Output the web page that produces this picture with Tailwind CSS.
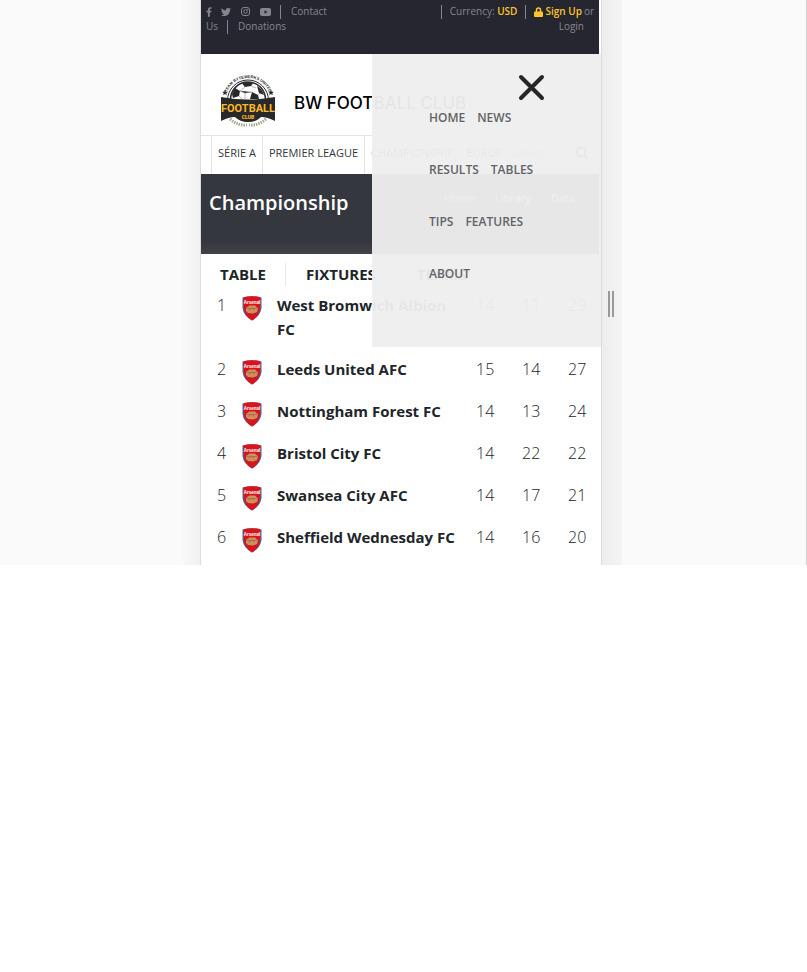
<!DOCTYPE html>
<html lang="en">
<head>
<meta charset="utf-8">
<meta name="viewport" content="width=device-width, initial-scale=1">
<title>BW Football Club</title>
<script src="https://cdn.jsdelivr.net/npm/@tailwindcss/browser@4"></script>
</head>
<body class="bg-white font-['Open_Sans','Noto_Sans',sans-serif] text-[#212529]">
<svg class="hidden" aria-hidden="true">
  <symbol id="crest" viewBox="0 0 20 25">
    <path d="M.5 1.500Q10-1 19.500 1.500V12Q18.500 20 10 24.500Q1.500 20 .5 12Z" fill="#5a5a8c"/>
    <path d="M1.800 1.300Q10-.8 18.200 1.300V10Q17.500 20 10 24.500Q2.500 20 1.800 10Z" fill="#d9141b"/>
    <text x="10" y="7.500" text-anchor="middle" font-family="Liberation Sans" font-size="4.500" font-weight="700" fill="#fff">Arsenal</text>
    <path d="M4 12L7.500 9.500L13 9.500L16 12.500L15 16L11 17.500L6 17L4 15Z" fill="#c9935f"/>
    <path d="M7 14.500a2.500 2 0 0 1 5 0M4.500 12.500H15" fill="none" stroke="#b4604a" stroke-width=".8"/>
  </symbol>
</svg>
<div class="flex justify-center border-r border-[#d4d4d4] bg-[#fafafa] pr-1">
  <div class="flex flex-1 justify-end"><span class="w-5 bg-linear-to-r from-[#fafafa] to-[#f1f1f1]"></span></div>
  <main class="relative w-full max-w-[402px] shrink-0 border-x border-[#dcdcdc] bg-white pb-[5px]">
    <header class="mr-[2px] flex h-[54px] justify-between bg-[#25262f] px-[5px] pt-1 text-[10px] leading-[15px] text-[#85868c]">
      <div>
        <div class="flex items-center">
          <a href="#" aria-label="Facebook"><svg class="h-[10px] w-[6px]" viewBox="0 0 320 512" fill="currentColor"><path d="M279 288l14-93h-89v-60c0-25 12-50 52-50h41V7S260 0 225 0C152 0 104 44 104 125v70H23v93h81v224h100V288z"/></svg></a>
          <a href="#" aria-label="Twitter" class="ml-[9px]"><svg class="h-[10px] w-[10px]" viewBox="0 0 512 512" fill="currentColor"><path d="M459 152c1 4 1 9 1 13 0 139-106 299-299 299-59 0-115-17-161-47 8 1 16 1 25 1 49 0 94-17 130-45-46-1-85-31-98-73 7 1 13 2 20 2 9 0 19-1 28-4-48-10-84-52-84-103v-1c14 8 30 13 47 13-28-19-47-51-47-87 0-19 5-37 14-53 52 64 129 105 216 110-2-8-3-16-3-24 0-58 47-105 105-105 30 0 58 13 77 33 24-5 46-13 67-25-8 24-25 45-46 58 21-2 42-8 60-16-14 21-32 39-52 54z"/></svg></a>
          <a href="#" aria-label="Instagram" class="ml-[10px]"><svg class="h-[9px] w-[9px]" viewBox="0 0 18 18" fill="none" stroke="currentColor" stroke-width="2"><rect x="1" y="1" width="16" height="16" rx="5"/><circle cx="9" cy="9" r="3.700"/><circle cx="13.600" cy="4.400" r=".6"/></svg></a>
          <a href="#" aria-label="YouTube" class="ml-[10px]"><svg class="h-[8px] w-[11px]" viewBox="0 0 22 16"><rect width="22" height="16" rx="4" fill="currentColor"/><path d="M9 4.500v7l6-3.500z" fill="#25262f"/></svg></a>
          <span class="ml-[9px] h-[14px] w-px bg-current"></span>
          <a href="#" class="ml-[10px]">Contact</a>
        </div>
        <div class="flex items-center">
          <a href="#">Us</a>
          <span class="ml-[9px] h-[14px] w-px bg-current"></span>
          <a href="#" class="ml-[10px]">Donations</a>
        </div>
      </div>
      <div>
        <div class="flex items-center">
          <span class="h-[14px] w-px bg-current"></span>
          <span class="ml-[8px]">Currency: <a href="#" class="font-semibold text-[#fdc52d]">USD</a></span>
          <span class="ml-[8px] h-[14px] w-px bg-current"></span>
          <svg class="ml-[8px] h-[10px] w-[9px] text-[#fdc52d]" viewBox="0 0 18 20" aria-hidden="true"><path d="M5 10V6a4 4 0 0 1 8 0v4" fill="none" stroke="currentColor" stroke-width="3"/><rect y="9" width="18" height="11" rx="2" fill="currentColor"/></svg>
          <a href="#" class="ml-[2px] font-semibold text-[#fdc52d]">Sign Up</a><span class="ml-[2px]">or</span>
        </div>
        <div class="pr-[10px] text-right"><a href="#">Login</a></div>
      </div>
    </header>

    <div class="flex h-[81px] items-center pl-[19px] pt-3">
      <svg class="h-[52px] w-[56px] overflow-visible" viewBox="0 0 56 52" role="img" aria-label="Team Bytewerks United Football Club">
        <defs><path id="arc" d="M5 26A23 23 0 0 1 51 26"/></defs>
        <text font-family="Liberation Sans" font-size="4" font-weight="700" fill="#292929" text-anchor="middle"><textPath href="#arc" startOffset="50%">TEAM BYTEWERKS UNITED</textPath></text>
        <circle cx="28" cy="25.500" r="20.500" fill="#fff" stroke="#292929"/>
        <path d="M5 15l.8 1.800h2l-1.500 1.400.5 2L5 19.100l-1.800 1.100.5-2-1.500-1.400h2zM51 15l.8 1.800h2l-1.500 1.400.5 2-1.800-1.100-1.800 1.100.5-2-1.500-1.400h2z" fill="#292929"/>
        <circle cx="28" cy="24.500" r="17.500" fill="#fff" stroke="#292929" stroke-width="1.500"/>
        <path d="M22 8.500Q28 6 33 8.500L31 11L25 12ZM12 19L15 13L20 16L19 21L13 23ZM37 11Q42 14 44 20L39 18ZM32 17L38 20L39 24H30Z" fill="#292929"/>
        <path d="M20 16l5-4M31 11l5 2M20 16l5 2 7-1M19 21l3 3M25 18v6M38 20l2-2" stroke="#888" stroke-width=".6"/>
        <path d="M1 22Q28 27 55 22V46Q47 42 41 42Q36 47 28 47Q20 47 15 42Q9 42 1 46Z" fill="#292929"/>
        <text x="28" y="37" text-anchor="middle" font-family="Roboto" font-size="11" font-weight="700" fill="#fcb827">FOOTBALL</text>
        <text x="28" y="44" text-anchor="middle" font-family="Roboto" font-size="5" font-weight="900" fill="#fcb827">CLUB</text>
        <path d="M10 44q8 7 17 6M46 44q-8 7-17 6" fill="none" stroke="#a3a98f" stroke-width="3" stroke-dasharray="1.500 1"/>
      </svg>
      <h1 class="ml-[18px] mt-1 font-['Inter','Open_Sans',sans-serif] text-[17px] font-medium leading-6 text-black">BW FOOTBALL CLUB</h1>
    </div>

    <nav class="mr-[2px] flex h-[39px] border-t border-[#e4e4e4] pl-[10px] text-[11px] leading-[34px] text-[#34363d]" aria-label="Leagues">
      <a href="#" class="border-l border-[#e4e4e4] px-[6px]">SÉRIE A</a>
      <a href="#" class="border-l border-[#e4e4e4] px-[6px]">PREMIER LEAGUE</a>
      <a href="#" class="border-l border-[#e4e4e4] px-[6px]">CHAMPIONSHIP</a>
      <a href="#" class="border-l border-[#e4e4e4] px-[6px]">EUROF</a>
      <input type="search" aria-label="Search" placeholder="search" class="ml-1 h-[34px] w-0 flex-1 placeholder:text-[#888]">
      <button type="button" aria-label="Search" class="mr-[10px] h-[34px]"><svg class="size-[14px]" viewBox="0 0 14 14" fill="none" stroke="#333" stroke-width="2"><circle cx="6" cy="6" r="4.500"/><path d="M9.500 9.500L13 13"/></svg></button>
    </nav>

    <section class="mr-[2px] flex h-[80px] justify-between bg-linear-to-b from-[#35373f] from-85% to-[#42434b] px-2 text-white">
      <h2 class="pt-[15px] text-[20px] font-semibold leading-7">Championship</h2>
      <ol class="flex gap-5 pr-4 pt-[15px] text-[11px] leading-[18px]"><li><a href="#">Home</a></li><li><a href="#">Library</a></li><li>Data</li></ol>
    </section>

    <nav class="flex h-[31px] items-center pt-[9px] text-[15px] font-bold leading-[23px]" aria-label="Championship">
      <a href="#" class="border-r border-[#e8e8e8] px-[19px]">TABLE</a>
      <a href="#" class="border-r border-[#e8e8e8] px-5">FIXTURES</a>
      <a href="#" class="px-5">TEAMS</a>
    </nav>

    <table class="mb-px w-full table-fixed text-left text-[16px] leading-6 [&_td]:p-2 [&_td]:align-top [&_td]:font-light [&_th]:p-2 [&_th]:align-top [&_th]:text-[15px] [&_th]:font-bold [&_tr]:h-[42px] [&_svg]:mt-[3px] [&_svg]:h-[25px] [&_svg]:w-5 [&_td:nth-child(2)]:py-0 [&_td:nth-child(2)]:pt-2">
      <colgroup><col class="w-[33px]"><col class="w-[35px]"><col><col class="w-[46px]"><col class="w-[46px]"><col class="w-[41px]"></colgroup>
      <tbody>
        <tr><td class="pl-4!">1</td><td><svg><use href="#crest"/></svg></td><th scope="row">West Bromwich Albion FC</th><td>14</td><td>11</td><td>29</td></tr>
        <tr><td class="pl-4!">2</td><td><svg><use href="#crest"/></svg></td><th scope="row">Leeds United AFC</th><td>15</td><td>14</td><td>27</td></tr>
        <tr><td class="pl-4!">3</td><td><svg><use href="#crest"/></svg></td><th scope="row">Nottingham Forest FC</th><td>14</td><td>13</td><td>24</td></tr>
        <tr><td class="pl-4!">4</td><td><svg><use href="#crest"/></svg></td><th scope="row">Bristol City FC</th><td>14</td><td>22</td><td>22</td></tr>
        <tr><td class="pl-4!">5</td><td><svg><use href="#crest"/></svg></td><th scope="row">Swansea City AFC</th><td>14</td><td>17</td><td>21</td></tr>
        <tr><td class="pl-4!">6</td><td><svg><use href="#crest"/></svg></td><th scope="row">Sheffield Wednesday FC</th><td>14</td><td>16</td><td>20</td></tr>
      </tbody>
    </table>

    <aside class="absolute right-0 top-[54px] w-[229px] bg-[#eee]/96 pb-16 pl-[57px] pt-5 text-[12px] font-semibold leading-[18px] text-[#626367]">
      <button type="button" aria-label="Close menu" class="ml-[89px] block"><svg class="size-[27px]" viewBox="0 0 27 27" fill="none" stroke="#262626" stroke-width="4" stroke-linecap="round"><path d="M3 3L24 24M24 3L3 24"/></svg></button>
      <nav class="mt-2 grid gap-[34px]" aria-label="Main">
        <div class="flex gap-3"><a href="#">HOME</a><a href="#">NEWS</a></div>
        <div class="flex gap-3"><a href="#">RESULTS</a><a href="#">TABLES</a></div>
        <div class="flex gap-3"><a href="#">TIPS</a><a href="#">FEATURES</a></div>
        <div class="flex gap-3"><a href="#">ABOUT</a></div>
      </nav>
    </aside>
  </main>
  <div class="flex flex-1"><div class="w-5 bg-linear-to-r from-[#ededed] to-[#f4f4f4] pl-[6px] pt-[291px]"><span class="block h-[26px] w-[6px] border-x-2 border-[#999]"></span></div></div>
</div>
</body>
</html>
